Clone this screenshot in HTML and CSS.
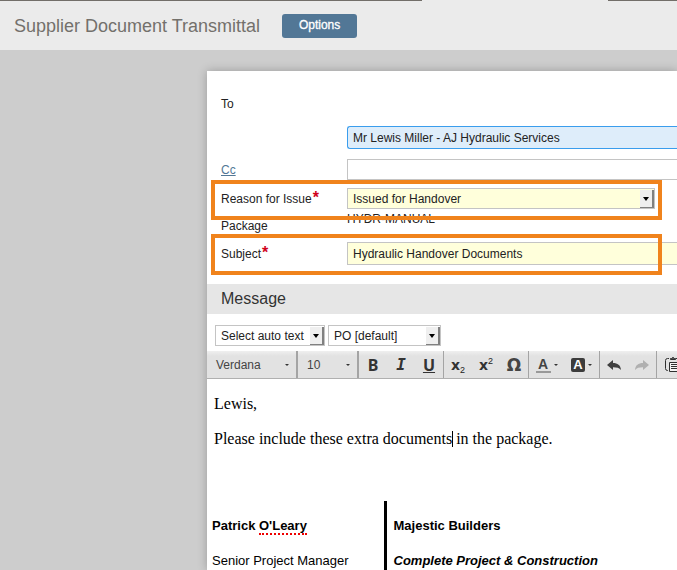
FILE: index.html
```html
<!DOCTYPE html>
<html lang="en">
<head>
    <meta charset="UTF-8">
    <meta name="viewport" content="width=device-width, initial-scale=1.0">
    <title>Supplier Document Transmittal</title>
    <link rel="stylesheet" href="styles.css">
</head>
<body>
    <div class="tab-strip"><span></span><span class="active-tab"></span><span></span></div>
    <header class="header">
        <h1>Supplier Document Transmittal</h1>
        <button type="button" class="options">Options</button>
    </header>

    <main class="panel">
        <form class="fields">
            <div class="row to-row">
                <label for="to">To</label>
                <input id="to" class="recipient" type="text" value="Mr Lewis Miller - AJ Hydraulic Services">
            </div>
            <div class="row cc-row">
                <a href="#cc">Cc</a>
                <input id="cc" type="text" aria-label="Cc">
            </div>
            <div class="row highlight">
                <label for="reason">Reason for Issue<span class="required">*</span></label>
                <div class="select wide">
                    <select id="reason"><option>Issued for Handover</option></select>
                    <span class="arrow"></span>
                </div>
            </div>
            <div class="row package-row">
                <span>Package</span>
                <span class="package">HYDR-MANUAL</span>
            </div>
            <div class="row highlight subject-row">
                <label for="subject">Subject<span class="required">*</span></label>
                <input id="subject" class="mandatory" type="text" value="Hydraulic Handover Documents">
            </div>
        </form>

        <h2>Message</h2>

        <div class="templates">
            <div class="select auto-text">
                <select aria-label="Auto text"><option>Select auto text</option></select>
                <span class="arrow"></span>
            </div>
            <div class="select signature-select">
                <select aria-label="Signature"><option>PO [default]</option></select>
                <span class="arrow"></span>
            </div>
        </div>

        <div class="toolbar">
            <div class="group font-group"><button type="button" class="combo">Verdana<i class="caret"></i></button></div>
            <div class="group size-group"><button type="button" class="combo">10<i class="caret"></i></button></div>
            <div class="group">
                <button type="button" class="bold">B</button>
                <button type="button" class="italic">I</button>
                <button type="button" class="underline">U</button>
            </div>
            <div class="group">
                <button type="button" class="script" aria-label="Subscript"><b>x</b><small class="sub">2</small></button>
                <button type="button" class="script" aria-label="Superscript"><b>x</b><small class="sup">2</small></button>
                <button type="button" class="omega" aria-label="Special character">Ω</button>
            </div>
            <div class="group color-group">
                <button type="button" aria-label="Text colour"><span class="text-color">A</span><i class="caret"></i></button>
                <button type="button" aria-label="Background colour"><span class="back-color">A</span><i class="caret"></i></button>
            </div>
            <div class="group">
                <button type="button" aria-label="Undo">
                    <svg width="16" height="14" viewBox="0 0 16 14"><path d="M1 7 7 2v3c4.600 0 7.500 2 8 7C13.300 9.800 11 9.200 7 9.200V12z" fill="#404040"/></svg>
                </button>
                <button type="button" aria-label="Redo" disabled>
                    <svg width="16" height="14" viewBox="0 0 16 14"><path d="M15 7 9 2v3c-4.600 0-7.500 2-8 7C2.700 9.800 5 9.200 9 9.200V12z" fill="#b0b0b0"/></svg>
                </button>
            </div>
            <div class="group last">
                <button type="button" aria-label="Paste">
                    <svg width="18" height="18" viewBox="0 0 18 18" fill="none" stroke="#303030">
                        <path d="M5 2.500H3.500a2 2 0 0 0-2 2v8a2 2 0 0 0 2 2H4M12 2.500h1.500"/>
                        <path d="M6.500 3.500v-1h1l1-1h1l1 1h1v1z" fill="#555"/>
                        <path d="M5.500 6.500h11v9h-11z" fill="#f4f4f4"/>
                        <path d="M7 8.500h7M7 10.500h7M7 12.500h7"/>
                    </svg>
                </button>
            </div>
        </div>

        <div class="editor" contenteditable="true" spellcheck="false">
            <p>Lewis,</p>
            <p>Please include these extra documents<span class="cursor"></span> in the package.</p>
            <table class="signature">
                <tr>
                    <td><b>Patrick <span class="misspelt">O'Leary</span></b></td>
                    <td><b>Majestic Builders</b></td>
                </tr>
                <tr>
                    <td>Senior Project Manager</td>
                    <td><b><em>Complete Project &amp; Construction</em></b></td>
                </tr>
                <tr>
                    <td></td>
                    <td></td>
                </tr>
            </table>
        </div>
    </main>
</body>
</html>
```
FILE: styles.css
```css
* {
    box-sizing: border-box;
}
body {
    margin: 0;
    height: 100vh;
    display: flex;
    flex-direction: column;
    overflow: hidden;
    background: #cdcdcd;
    color: #222;
    font-family: "Liberation Sans", Arial, sans-serif;
    font-size: 12px;
}
button, input, select {
    font: inherit;
    color: inherit;
}

/* header */
.tab-strip {
    display: flex;
    flex: none;
    height: 1px;
    background: #ebebeb;
}
.tab-strip span {
    flex: 422;
    background: #726e69;
}
.tab-strip .active-tab {
    flex: 186;
    background: #ebebeb;
}
.tab-strip span:last-child {
    flex: 69;
}
.header {
    display: flex;
    flex: none;
    align-items: center;
    gap: 22px;
    height: 49px;
    padding: 1px 0 0 14px;
    background: #ebebeb;
}
.header h1 {
    margin: 0;
    color: #73706b;
    font-size: 18px;
    font-weight: normal;
}
.options {
    width: 75px;
    height: 24px;
    padding: 0 0 2px;
    border: none;
    border-radius: 3px;
    background: #527796;
    color: #fff;
    -webkit-text-stroke: 0.3px #fff;
}

/* form */
.panel {
    display: flex;
    flex: 1;
    flex-direction: column;
    min-height: 0;
    margin: 21px 0 0 207px;
    background: #fff;
    box-shadow: 0 0 9px rgba(0, 0, 0, 0.25);
}
.fields {
    padding: 25px 0 19px 14px;
}
.row {
    display: grid;
    grid-template-columns: 126px 1fr;
    align-items: center;
    position: relative;
}
.to-row {
    row-gap: 14px;
    margin-bottom: 10px;
    line-height: 16px;
}
.to-row label {
    grid-column: 1 / -1;
}
.cc-row {
    margin-bottom: 8px;
}
.row a {
    color: #527796;
}
.row input {
    width: 100%;
    height: 21px;
    padding: 0 5px;
    border: 1px solid #c4c4c4;
    border-right: none;
    background: #fff;
}
.row .recipient {
    grid-column: 2;
    height: 23px;
    border-color: #3a9ded;
    border-radius: 3px 0 0 3px;
    background: #deedfa;
}
.row .mandatory {
    height: 23px;
    background: #ffffdb;
}
.required {
    margin-left: 1px;
    color: #d0021b;
    font-size: 16px;
    font-weight: bold;
    line-height: 12px;
}
.package-row {
    height: 33px;
}
.package {
    align-self: start;
    line-height: 20px;
}
.highlight::after {
    content: "";
    position: absolute;
    z-index: 1;
    top: -8px;
    left: -10px;
    box-sizing: border-box;
    width: 451px;
    height: 40px;
    border: 4px solid #f0831c;
    pointer-events: none;
}
.subject-row::after {
    height: 41px;
}

/* drop-downs */
.select {
    position: relative;
    height: 21px;
}
.select select {
    width: 100%;
    height: 100%;
    padding: 0 5px;
    appearance: none;
    border: 1px solid #c4c4c4;
    border-radius: 0;
    background: #fff;
}
.wide {
    width: 308px;
}
.wide select {
    background: #ffffdb;
}
.arrow {
    position: absolute;
    top: 2px;
    right: 1px;
    width: 14px;
    height: 18px;
    border: solid #808080;
    border-width: 0 2px 1px 0;
    background: #efefef;
    pointer-events: none;
}
.arrow::after {
    content: "";
    position: absolute;
    top: 7px;
    left: 3px;
    border: 3px solid transparent;
    border-top: 4px solid #000;
    border-bottom: none;
}

/* message */
h2 {
    margin: 0;
    padding: 0 0 1px 14px;
    background: #e6e6e6;
    color: #333;
    font-size: 16px;
    font-weight: normal;
    line-height: 29px;
}
.templates {
    display: flex;
    gap: 3px;
    padding: 11px 8px 5px;
}
.auto-text {
    width: 110px;
}
.signature-select {
    width: 113px;
}
.toolbar {
    display: flex;
    flex: none;
    height: 28px;
    overflow: hidden;
    border-bottom: 1px solid #b0b0b0;
    background: linear-gradient(#efefef, #e2e2e2 5px);
    color: #444;
}
.group {
    display: flex;
    flex: none;
    border-right: 1px solid #a4a4a4;
}
.group button {
    display: flex;
    align-items: center;
    justify-content: center;
    width: 28px;
    padding: 0;
    border: none;
    background: none;
}
.group .combo {
    flex: 1;
    justify-content: space-between;
    padding: 0 7px 0 9px;
    font-size: 12px;
}
.font-group {
    width: 91px;
    border-right-width: 2px;
}
.size-group {
    width: 61px;
    border-right-width: 2px;
}
.last {
    border: none;
    padding-left: 2px;
}
.caret {
    border: 2px solid transparent;
    border-top: 2px solid #333;
    border-bottom: none;
}
.group .bold, .group .italic, .group .underline {
    color: #333;
    font-family: "Noto Sans", sans-serif;
    font-size: 16px;
    font-weight: bold;
}
.group .italic {
    font-family: "DejaVu Sans Mono", monospace;
    font-style: italic;
}
.group .underline {
    text-decoration: underline;
}
.script b {
    color: #333;
    font-family: "DejaVu Sans", sans-serif;
    font-size: 14px;
}
.script small {
    font-size: 9px;
    color: #222;
}
.script .sub {
    padding-top: 10px;
}
.script .sup {
    padding-bottom: 8px;
}
.group .omega {
    font-family: "DejaVu Sans", sans-serif;
    font-size: 17px;
    font-weight: bold;
}
.group.color-group button {
    gap: 3px;
    width: 35px;
}
.text-color {
    width: 15px;
    border-bottom: 2px solid #999;
    font-size: 14px;
    font-weight: bold;
    line-height: 14px;
}
.back-color {
    width: 14px;
    border-radius: 2px;
    background: #3c3c3c;
    color: #fff;
    font-size: 13px;
    font-weight: bold;
    line-height: 14px;
}

/* editor */
.editor {
    flex: 1;
    min-height: 0;
    overflow: hidden;
    padding: 15px 5px 0;
    color: #000;
    font-family: "Liberation Serif", "Times New Roman", serif;
    font-size: 16px;
    line-height: 19px;
    outline: none;
}
.editor p {
    margin: 0 2px 16px;
}
.cursor {
    display: inline-block;
    width: 1px;
    height: 16px;
    margin-right: -1px;
    background: #000;
    vertical-align: -3px;
}
.signature {
    margin-top: 53px;
    border-collapse: collapse;
    font-family: "Liberation Sans", Arial, sans-serif;
    font-size: 13px;
}
.signature td {
    height: 35px;
    padding: 0;
    vertical-align: bottom;
    line-height: 20px;
}
.signature td:first-child {
    width: 173px;
    border-right: 3px solid #000;
}
.signature td:last-child {
    padding-left: 7px;
}
.misspelt {
    border-bottom: 2px dotted #e00;
}
```
